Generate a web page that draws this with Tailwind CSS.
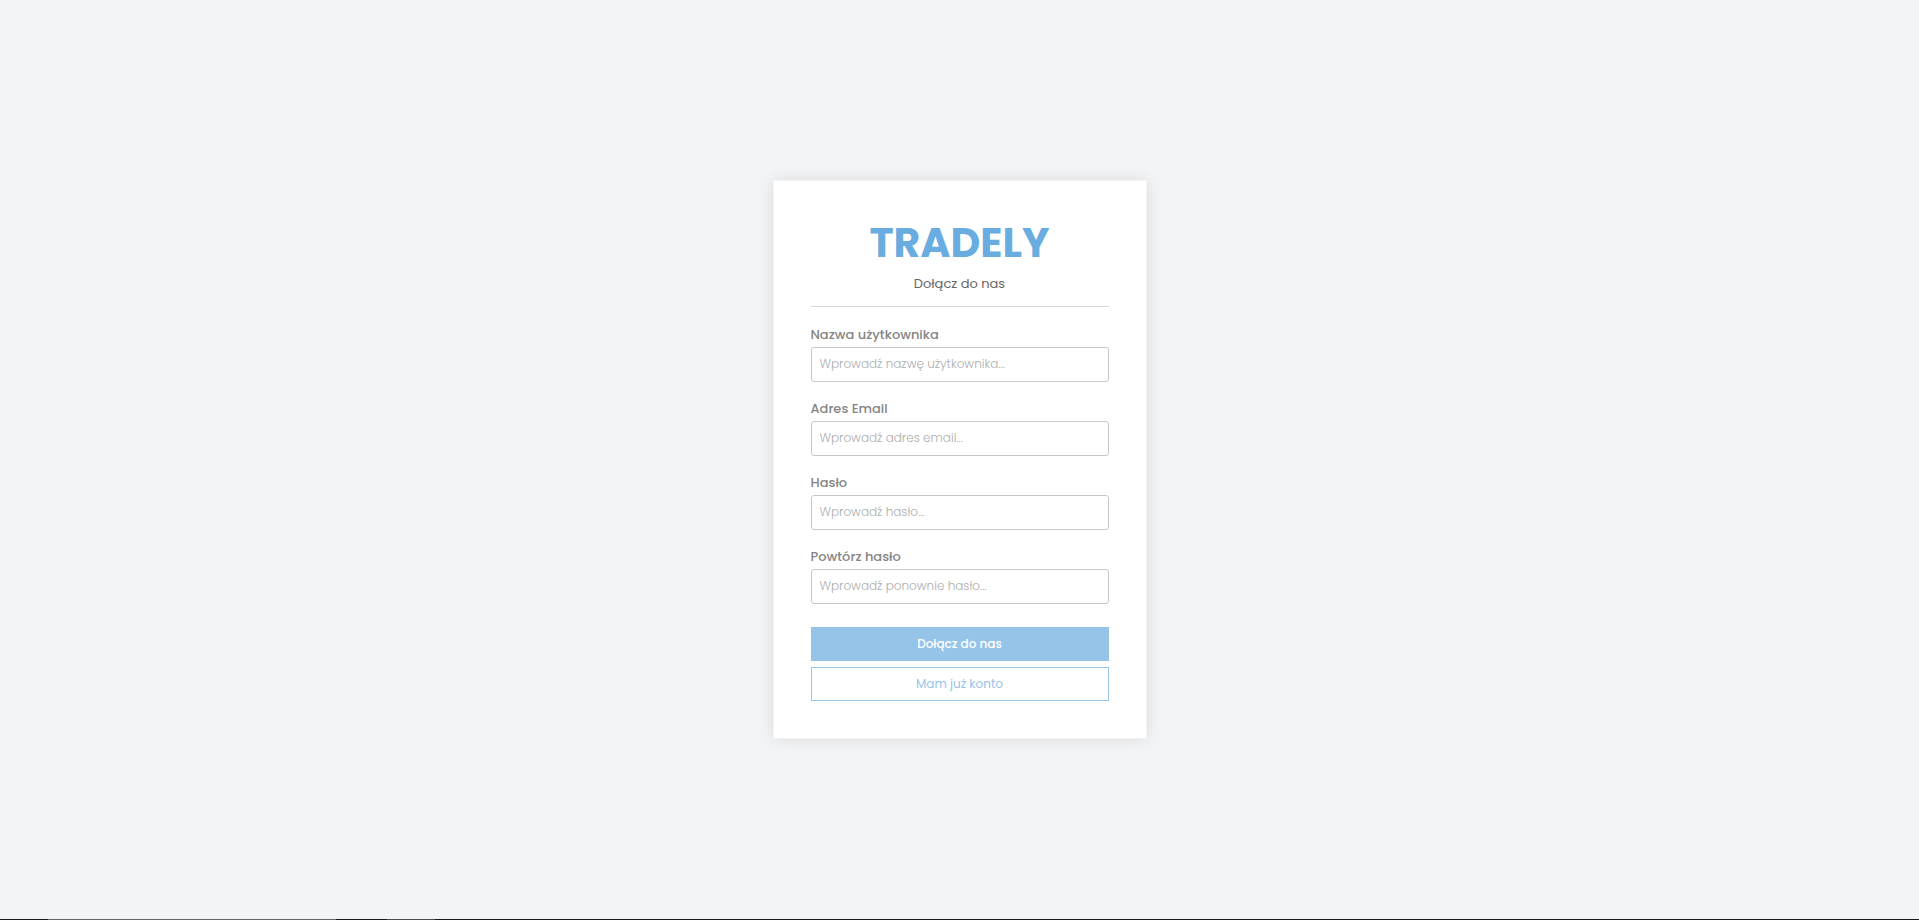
<!DOCTYPE html>
<html lang="pl">
<head>
<meta charset="utf-8">
<meta name="viewport" content="width=device-width, initial-scale=1">
<title>Tradely</title>
<script src="https://cdn.jsdelivr.net/npm/@tailwindcss/browser@4"></script>
</head>
<body class="flex min-h-screen flex-col bg-[#f3f4f6] font-['Poppins',Inter,sans-serif] text-[13px] leading-6 text-[#666666]">
<main class="flex flex-1 items-center justify-center">
  <form class="flex w-full max-w-[374px] flex-col border border-[#f3f3f3] bg-white px-[37px] py-[37px] shadow-[0_0_15px_rgba(0,0,0,0.1)]">
    <h1 class="text-center text-[41px] leading-[50px] font-bold text-[#69ade0]">TRADELY</h1>
    <p class="mt-1 border-b border-[#d6d6d6] pb-2.5 text-center">Dołącz do nas</p>
    <div class="mt-4 flex flex-col gap-[15px]">
      <div class="flex flex-col">
        <label for="user" class="font-medium text-[#858585]">Nazwa użytkownika</label>
        <input id="user" type="text" placeholder="Wprowadź nazwę użytkownika..." class="h-[35px] w-full rounded-[3px] border border-[#c8c8c8] px-2 pb-0.5 text-xs font-light placeholder:text-[#adadad]">
      </div>
      <div class="flex flex-col">
        <label for="email" class="font-medium text-[#858585]">Adres Email</label>
        <input id="email" type="email" placeholder="Wprowadź adres email..." class="h-[35px] w-full rounded-[3px] border border-[#c8c8c8] px-2 pb-0.5 text-xs font-light placeholder:text-[#adadad]">
      </div>
      <div class="flex flex-col">
        <label for="pass" class="font-medium text-[#858585]">Hasło</label>
        <input id="pass" type="password" placeholder="Wprowadź hasło..." class="h-[35px] w-full rounded-[3px] border border-[#c8c8c8] px-2 pb-0.5 text-xs font-light placeholder:text-[#adadad]">
      </div>
      <div class="flex flex-col">
        <label for="pass2" class="font-medium text-[#858585]">Powtórz hasło</label>
        <input id="pass2" type="password" placeholder="Wprowadź ponownie hasło..." class="h-[35px] w-full rounded-[3px] border border-[#c8c8c8] px-2 pb-0.5 text-xs font-light placeholder:text-[#adadad]">
      </div>
    </div>
    <button type="submit" class="mt-[23px] h-[34px] bg-[#95c4e8] text-xs font-medium text-white">Dołącz do nas</button>
    <button type="button" class="mt-1.5 h-[34px] border border-[#95c4e8] text-xs text-[#95c4e8]">Mam już konto</button>
  </form>
</main>
<div class="flex h-px bg-[#1a1a1a]">
  <div class="ml-12 w-72 bg-[#666666]"></div>
  <div class="ml-[51px] w-12 bg-[#4c4c4c]"></div>
</div>
</body>
</html>
